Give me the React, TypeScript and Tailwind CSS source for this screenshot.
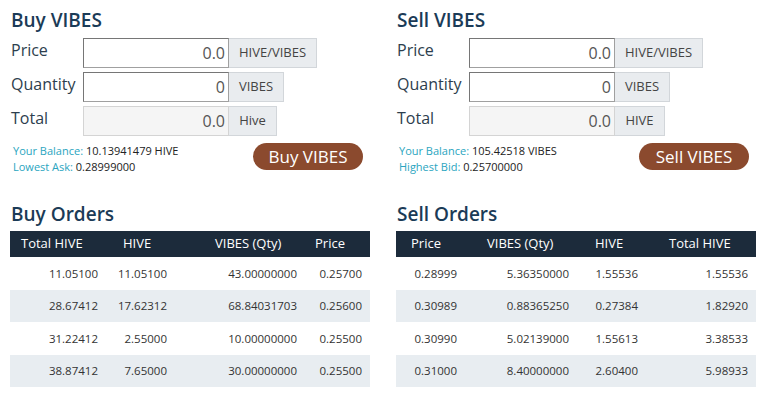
import React from 'react';

type Row = string[];

const buyRows: Row[] = [
  ['11.05100', '11.05100', '43.00000000', '0.25700'],
  ['28.67412', '17.62312', '68.84031703', '0.25600'],
  ['31.22412', '2.55000', '10.00000000', '0.25500'],
  ['38.87412', '7.65000', '30.00000000', '0.25500'],
];

const sellRows: Row[] = [
  ['0.28999', '5.36350000', '1.55536', '1.55536'],
  ['0.30989', '0.88365250', '0.27384', '1.82920'],
  ['0.30990', '5.02139000', '1.55613', '3.38533'],
  ['0.31000', '8.40000000', '2.60400', '5.98933'],
];

function Field({ label, value, unit, unitW, disabled }: { label: string; value: string; unit: string; unitW: string; disabled?: boolean }) {
  return (
    <div className="flex items-start h-[30px]">
      <div className="w-[73px] pl-[1px] h-6 leading-6 text-[16px] text-[#2d3e4e]">{label}</div>
      <div
        className={
          disabled
            ? 'w-[146px] h-[30px] flex items-center justify-end pr-[3px] border border-[#d4d4d4] bg-[#f5f5f5] text-[16px] text-[#555]'
            : 'w-[146px] h-[30px] flex items-center justify-end pr-[3px] border border-[#a0a0a0] border-t-[#767676] border-l-[#767676] bg-white text-[16px] text-[#555]'
        }
      >
        {value}
      </div>
      <div className={`${unitW} h-[30px] flex items-center justify-center border border-l-0 border-[#d2d6da] bg-[#e9ecef] text-[13px] text-[#444]`}>
        {unit}
      </div>
    </div>
  );
}

function OrdersTable({ heads, rows, cols, headPad, }: { heads: string[]; rows: Row[]; cols: string; headPad: string[] }) {
  return (
    <div className="mt-[4px] w-[360px]">
      <div className={`grid ${cols} h-[26px] bg-[#1c2b3b] text-white text-[13px] items-center`}>
        {heads.map((h, i) => (
          <div key={h} className={headPad[i]}>{h}</div>
        ))}
      </div>
      {rows.map((r, ri) => (
        <div key={ri} className={`grid ${cols} h-[32.5px] items-center text-[11.5px] text-[#333] ${ri % 2 === 1 ? 'bg-[#e8edf1]' : 'bg-white'}`}>
          {r.map((c, ci) => (
            <div key={ci} className="text-right pr-[8px]">{c}</div>
          ))}
        </div>
      ))}
    </div>
  );
}

function Panel({ side }: { side: 'buy' | 'sell' }) {
  const buy = side === 'buy';
  return (
    <div className="w-[360px] flex flex-col">
      <h2 className="mt-[7px] h-[26px] leading-[26px] pl-[1px] text-[19px] font-semibold text-[#1b3b57]">
        {buy ? 'Buy VIBES' : 'Sell VIBES'}
      </h2>
      <div className="mt-[5px] flex flex-col gap-[4px]">
        <Field label="Price" value="0.0" unit="HIVE/VIBES" unitW="w-[88px]" />
        <Field label="Quantity" value="0" unit="VIBES" unitW="w-[55px]" />
        <Field label="Total" value="0.0" unit={buy ? 'Hive' : 'HIVE'} unitW={buy ? 'w-[48px]' : 'w-[50px]'} disabled />
      </div>
      <div className="mt-[7px] flex items-start">
        <div className="flex-1 pl-[3px] text-[11px] leading-[16px] text-[#222]">
          <div>
            <span className="text-[#2aa5c0]">Your Balance:</span> {buy ? '10.13941479 HIVE' : '105.42518 VIBES'}
          </div>
          <div>
            <span className="text-[#2aa5c0]">{buy ? 'Lowest Ask:' : 'Highest Bid:'}</span> {buy ? '0.28999000' : '0.25700000'}
          </div>
        </div>
        <button className="mr-[7px] w-[110px] h-[27px] rounded-full bg-[#8b4a2e] text-white text-[17px] leading-[27px]">
          {buy ? 'Buy VIBES' : 'Sell VIBES'}
        </button>
      </div>
      <h2 className="mt-[26px] h-[26px] leading-[26px] pl-[1px] text-[19px] font-semibold text-[#1b3b57]">
        {buy ? 'Buy Orders' : 'Sell Orders'}
      </h2>
      {buy ? (
        <OrdersTable
          heads={['Total HIVE', 'HIVE', 'VIBES (Qty)', 'Price']}
          rows={buyRows}
          cols="grid-cols-[96px_69px_130px_65px]"
          headPad={['pl-[11px]', 'pl-[17px]', 'pl-[40px]', 'pl-[10px]']}
        />
      ) : (
        <OrdersTable
          heads={['Price', 'VIBES (Qty)', 'HIVE', 'Total HIVE']}
          rows={sellRows}
          cols="grid-cols-[69px_112px_69px_110px]"
          headPad={['pl-[15px]', 'pl-[22px]', 'pl-[18px]', 'pl-[23px]']}
        />
      )}
    </div>
  );
}

export default function App() {
  return (
    <div className="w-[768px] h-[393px] bg-white pl-[10px] flex gap-[26px] overflow-hidden" style={{ fontFamily: '"Open Sans", sans-serif' }}>
      <Panel side="buy" />
      <Panel side="sell" />
    </div>
  );
}
